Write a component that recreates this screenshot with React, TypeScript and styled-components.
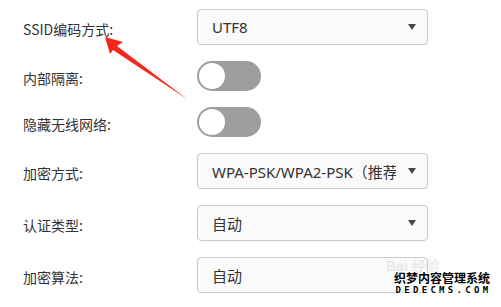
import React from "react";
import styled, { createGlobalStyle } from "styled-components";

const Global = createGlobalStyle`
  html, body { margin: 0; padding: 0; background: #fff; }
  body { width: 501px; height: 307px; overflow: hidden; font-family: "Noto Sans", "Noto Sans CJK SC", sans-serif; }
`;

const Page = styled.div`
  position: relative;
  width: 501px;
  height: 307px;
  background: #fff;
  box-sizing: border-box;
  padding: 9px 0 0 23px;
`;

const Form = styled.div`
  display: grid;
  grid-template-columns: 174px 231px;
  row-gap: 16px;
  align-items: center;
`;

const Label = styled.div`
  font-size: 14px;
  color: #333;
  line-height: 20px;
  font-family: "Noto Sans CJK SC", sans-serif;
  padding-top: 3px;
`;

const SelectBox = styled.div`
  box-sizing: border-box;
  height: 36px;
  border: 1px solid #c9c9c9;
  border-radius: 4px;
  background: #fafafa;
  display: flex;
  align-items: center;
  padding: 0 11px 0 14px;
  font-size: 15px;
  color: #333;
  font-family: "Noto Sans", "Noto Sans CJK SC", sans-serif;
`;

const SelectText = styled.span`
  flex: 1;
  white-space: nowrap;
  overflow: hidden;
`;

const Caret = styled.span`
  flex: none;
  width: 0;
  height: 0;
  border-left: 4px solid transparent;
  border-right: 4px solid transparent;
  border-top: 6px solid #474747;
  margin-left: 12px;
`;

const Toggle = styled.div`
  box-sizing: border-box;
  width: 64px;
  height: 30px;
  border-radius: 15px;
  background: #9e9e9e;
  padding: 2px;
  display: flex;
  align-items: center;
`;

const Knob = styled.div`
  width: 26px;
  height: 26px;
  border-radius: 50%;
  background: #fff;
`;

const ArrowSvg = styled.svg`
  position: absolute;
  left: 0;
  top: 0;
  pointer-events: none;
`;

const Watermark = styled.div`
  position: absolute;
  right: 11px;
  bottom: 12px;
  display: flex;
  flex-direction: column;
  align-items: center;
  color: #000;
  text-shadow: -1px -1px 0 #fff, 1px -1px 0 #fff, -1px 1px 0 #fff, 1px 1px 0 #fff;
`;

const WmTitle = styled.div`
  font-family: "Noto Sans CJK SC", sans-serif;
  font-weight: 700;
  font-size: 12px;
  line-height: 14px;
`;

const WmSub = styled.div`
  font-family: "DejaVu Sans Mono", monospace;
  font-weight: 700;
  font-size: 9px;
  line-height: 10px;
  letter-spacing: 3.3px;
  margin-right: -3px;
`;

const Baidu = styled.div`
  position: absolute;
  left: 386px;
  top: 258px;
  font-family: "Liberation Sans", "Noto Sans CJK SC", sans-serif;
  font-size: 14px;
  line-height: 16px;
  color: rgba(190, 190, 190, 0.3);
  font-weight: 700;
`;

function Select({ value }: { value: string }) {
  return (
    <SelectBox>
      <SelectText>{value}</SelectText>
      <Caret />
    </SelectBox>
  );
}

function Switch() {
  return (
    <Toggle>
      <Knob />
    </Toggle>
  );
}

export default function App() {
  return (
    <>
      <Global />
      <Page>
        <Form>
          <Label>SSID编码方式:</Label>
          <Select value="UTF8" />
          <Label>内部隔离:</Label>
          <Switch />
          <Label>隐藏无线网络:</Label>
          <Switch />
          <Label>加密方式:</Label>
          <Select value="WPA-PSK/WPA2-PSK（推荐）" />
          <Label>认证类型:</Label>
          <Select value="自动" />
          <Label>加密算法:</Label>
          <Select value="自动" />
        </Form>
        <ArrowSvg width="501" height="307" viewBox="0 0 501 307">
          <polygon
            points="105,37 123,42 117,46 187,99 113,50 110,54"
            fill="#f5261c"
          />
        </ArrowSvg>
        <Baidu>Bai 经验</Baidu>
        <Watermark>
          <WmTitle>织梦内容管理系统</WmTitle>
          <WmSub>DEDECMS.COM</WmSub>
        </Watermark>
      </Page>
    </>
  );
}
